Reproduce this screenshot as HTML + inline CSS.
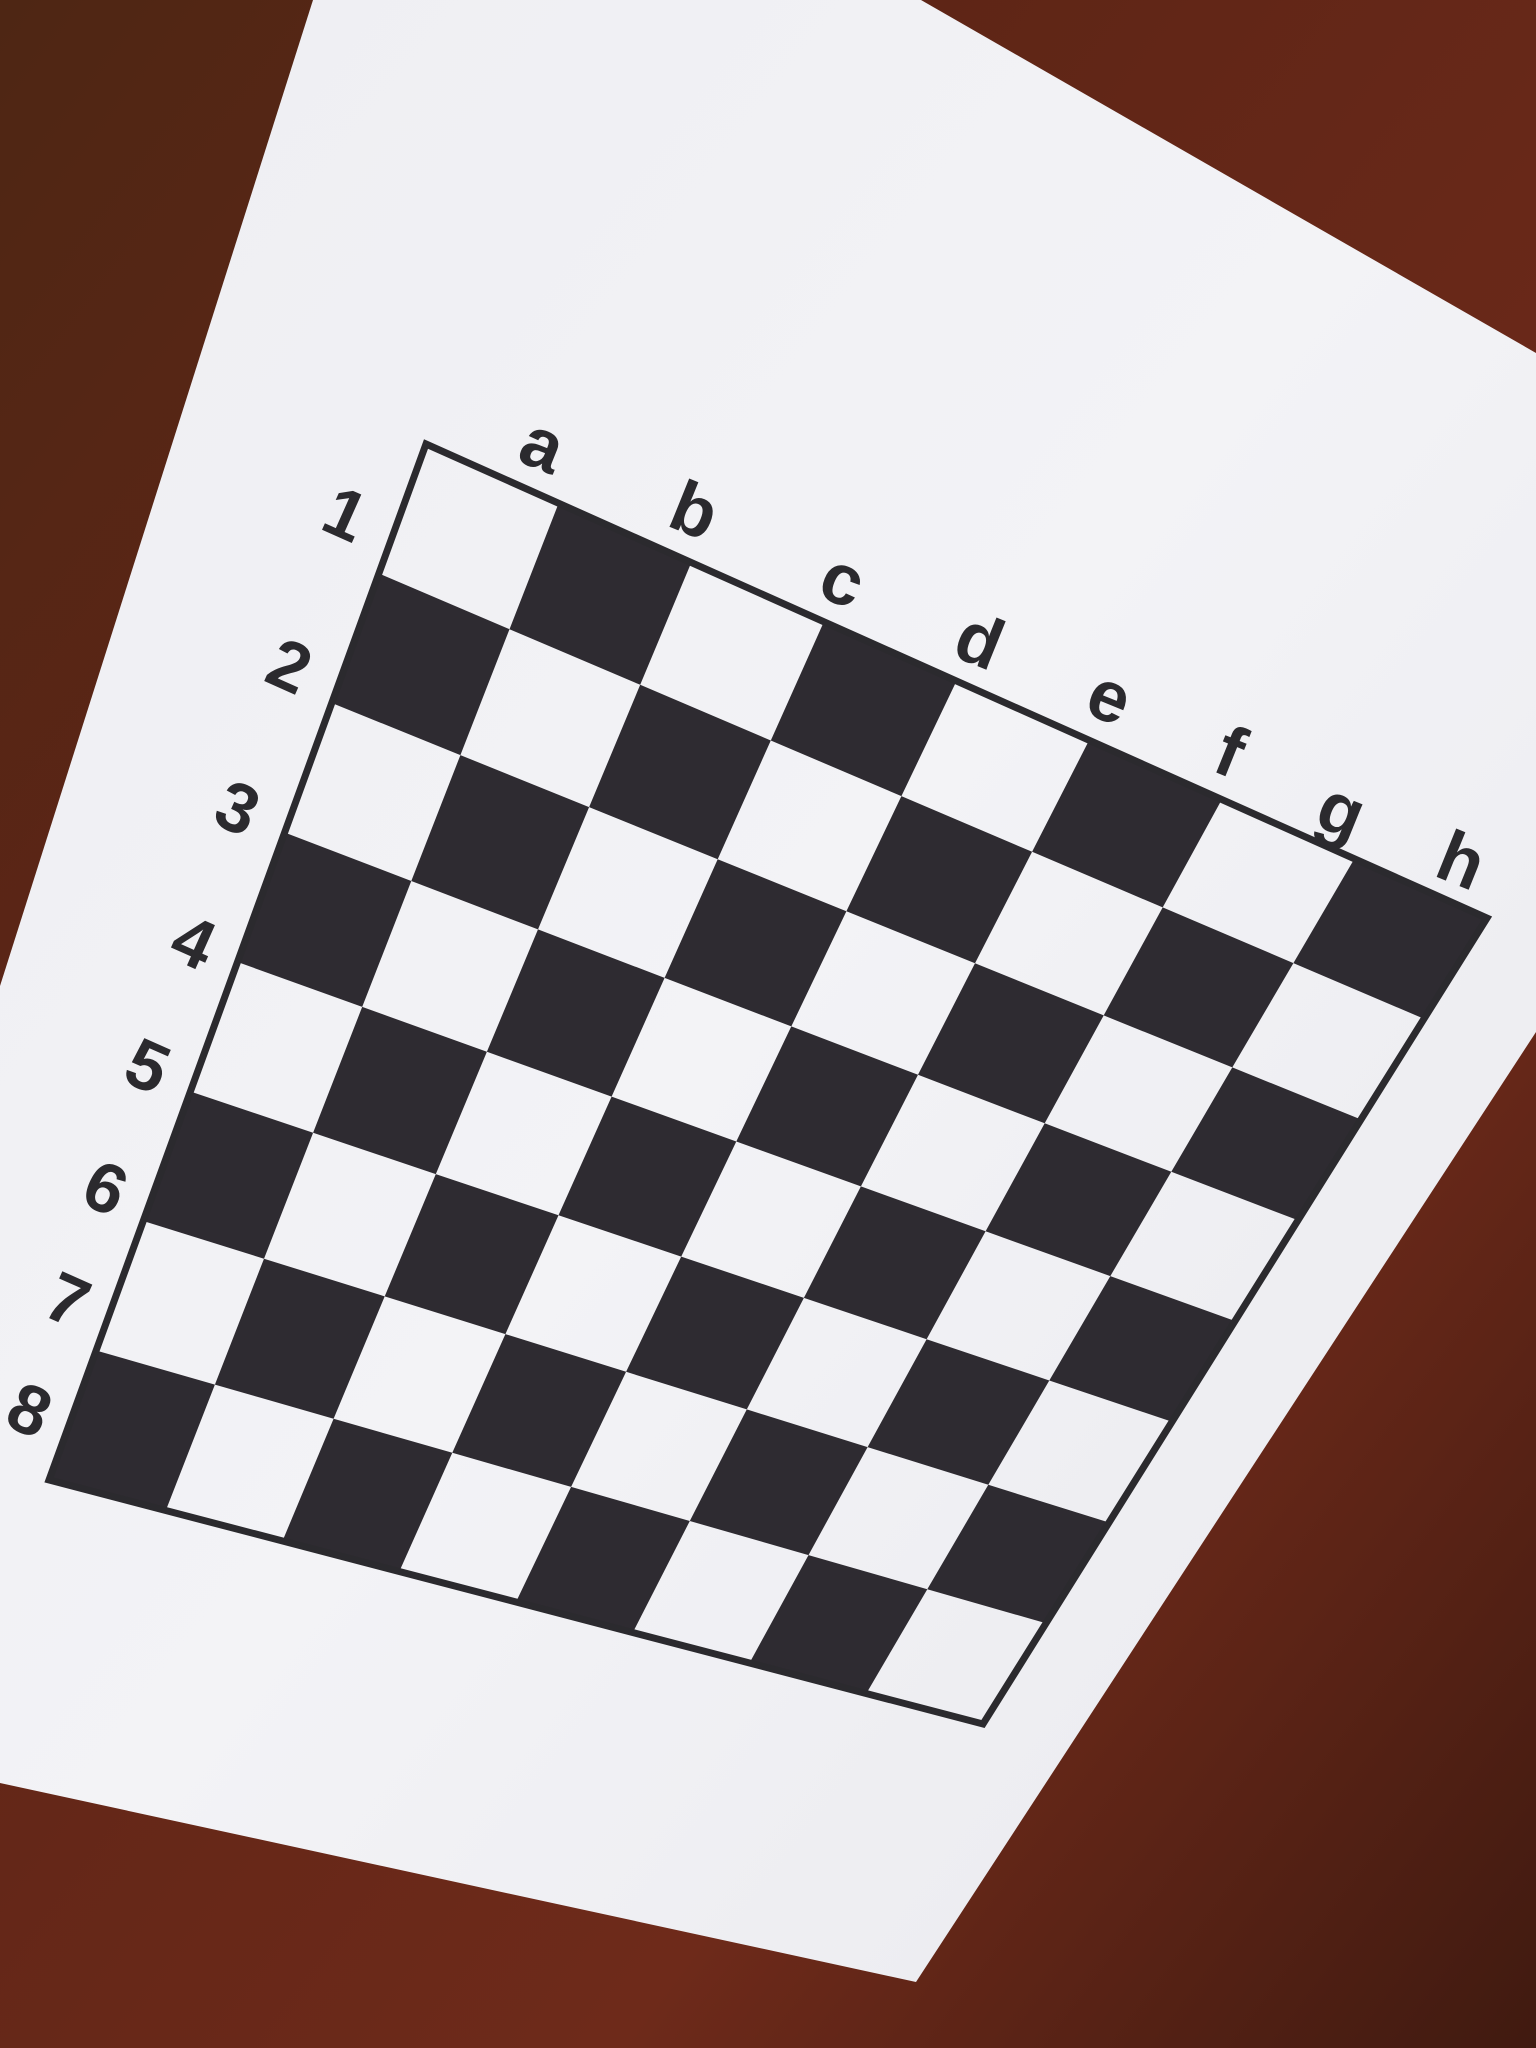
<!DOCTYPE html>
<html><head><meta charset="utf-8"><style>
html,body{margin:0;padding:0;width:1536px;height:2048px;overflow:hidden;background:#5a2114}
svg{display:block}
text{font-family:"Liberation Sans",sans-serif;font-weight:bold;fill:#2b2a2e}
</style></head><body>
<svg id="s" width="1536" height="2048" viewBox="0 0 1536 2048" xmlns="http://www.w3.org/2000/svg">
<defs>
<linearGradient id="wood" x1="0" y1="0" x2="1" y2="1">
<stop offset="0" stop-color="#4e2614"/>
<stop offset="0.3" stop-color="#5e2516"/>
<stop offset="0.7" stop-color="#6e2a1a"/>
<stop offset="1" stop-color="#401a10"/>
</linearGradient>
<linearGradient id="paper" x1="0" y1="0" x2="1" y2="1">
<stop offset="0" stop-color="#eeeef2"/>
<stop offset="0.5" stop-color="#f3f3f6"/>
<stop offset="1" stop-color="#e9e9ee"/>
</linearGradient>
</defs>
<rect width="1536" height="2048" fill="url(#wood)"/>
<polygon points="313,0 921,0 1536,353 1536,1032 916,1982 0,1783 0,986" fill="url(#paper)"/>
<g id="board"></g>
<g font-size="72">
<text transform="translate(515,460) rotate(22)">a</text>
<text transform="translate(665,525) rotate(22)">b</text>
<text transform="translate(815,595) rotate(22)">c</text>
<text transform="translate(950,655) rotate(22)">d</text>
<text transform="translate(1082,712) rotate(22)">e</text>
<text transform="translate(1210,770) rotate(22)">f</text>
<text transform="translate(1312,825) rotate(22)">g</text>
<text transform="translate(1432,875) rotate(22)">h</text>
<text transform="translate(318,528) rotate(24)" font-size="70">1</text>
<text transform="translate(262,680) rotate(24)" font-size="70">2</text>
<text transform="translate(210,822) rotate(24)" font-size="70">3</text>
<text transform="translate(166,956) rotate(24)" font-size="70">4</text>
<text transform="translate(120,1080) rotate(24)" font-size="70">5</text>
<text transform="translate(78,1202) rotate(24)" font-size="70">6</text>
<text transform="translate(40,1314) rotate(24)" font-size="70">7</text>
<text transform="translate(2,1424) rotate(24)" font-size="70">8</text>
</g>
</svg>
<script>
(function(){
var TL=[426,444],TR=[1487,918],BL=[49,1480],BR=[983,1724];
function P(u,v){
 var x=(1-u)*(1-v)*TL[0]+u*(1-v)*TR[0]+(1-u)*v*BL[0]+u*v*BR[0];
 var y=(1-u)*(1-v)*TL[1]+u*(1-v)*TR[1]+(1-u)*v*BL[1]+u*v*BR[1];
 return x.toFixed(1)+","+y.toFixed(1);
}
var g=document.getElementById("board"),h="";
for(var r=0;r<8;r++)for(var c=0;c<8;c++){
 if((r+c)%2==1){
  var u0=c/8,u1=(c+1)/8,v0=r/8,v1=(r+1)/8;
  h+='<polygon fill="#2e2b31" points="'+P(u0,v0)+' '+P(u1,v0)+' '+P(u1,v1)+' '+P(u0,v1)+'"/>';
 }
}
h+='<polygon fill="none" stroke="#2b2a2e" stroke-width="7" points="'+P(0,0)+' '+P(1,0)+' '+P(1,1)+' '+P(0,1)+'"/>';
g.innerHTML=h;
})();
</script>
</body></html>
